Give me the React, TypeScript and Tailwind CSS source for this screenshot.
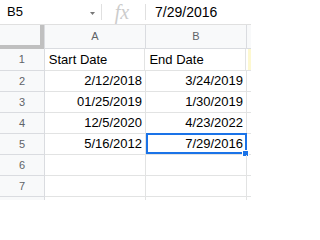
import React from 'react';

const rows: { n: number; a: string; b: string; alignA?: string }[] = [
  { n: 1, a: 'Start Date', b: 'End Date', alignA: 'left' },
  { n: 2, a: '2/12/2018', b: '3/24/2019' },
  { n: 3, a: '01/25/2019', b: '1/30/2019' },
  { n: 4, a: '12/5/2020', b: '4/23/2022' },
  { n: 5, a: '5/16/2012', b: '7/29/2016' },
  { n: 6, a: '', b: '' },
  { n: 7, a: '', b: '' },
];

const App = () => {
  return (
    <div className="w-[251px] h-[200px] overflow-hidden bg-white font-['Liberation_Sans',Arial,sans-serif] text-black">
      {/* formula bar */}
      <div className="flex flex-row items-center h-[25px] border-b border-[#e0e0e0]">
        <div className="w-[101px] h-full flex flex-row items-center justify-between pl-[7px] pr-[6px]">
          <span className="text-[13px]">B5</span>
          <svg width="5" height="3" viewBox="0 0 5 3" className="mt-[2px]">
            <path d="M0 0 L5 0 L2.5 3 Z" fill="#777" />
          </svg>
        </div>
        <div className="w-px h-[16px] bg-[#e0e0e0]" />
        <div className="w-[43px] flex justify-center pr-[3px] font-['Liberation_Serif',serif] italic text-[20px] text-[#cccccc] leading-none">
          fx
        </div>
        <div className="w-px h-[16px] bg-[#e0e0e0]" />
        <div className="pl-[9px] text-[14px]">7/29/2016</div>
      </div>

      {/* column headers */}
      <div className="flex flex-row h-[24px]">
        <div className="w-[45px] h-full bg-[#f8f9fa] border-r border-[#dadce0]">
          <div className="w-[44px] h-full border-r-4 border-b-4 border-[#c0c0c0]" />
        </div>
        <div className="w-[101px] h-full bg-[#f8f9fa] border-r border-b border-[#dadce0] flex items-center justify-center text-[11px] text-[#5f6368]">
          A
        </div>
        <div className="w-[101px] h-full bg-[#f8f9fa] border-r border-b border-[#dadce0] flex items-center justify-center text-[11px] text-[#5f6368]">
          B
        </div>
        <div className="flex-1 h-full bg-[#f8f9fa] border-b border-[#dadce0]" />
      </div>

      {/* data rows */}
      {rows.map((row) => (
        <div key={row.n} className={`flex flex-row ${row.n === 1 ? 'h-[22px]' : 'h-[21px]'}`}>
          <div className="w-[45px] h-full bg-[#f8f9fa] border-r border-b border-[#dadce0] flex items-center justify-center text-[11px] text-[#5f6368]">
            {row.n}
          </div>
          <div
            className={`w-[101px] h-full border-r border-b border-[#e2e3e3] flex items-center px-[3px] text-[13px] ${
              row.alignA === 'left' ? 'justify-start pl-[4px]' : 'justify-end'
            }`}
          >
            {row.a}
          </div>
          <div
            className={`relative w-[101px] h-full border-r border-b border-[#e2e3e3] flex items-center px-[3px] text-[13px] ${
              row.alignA === 'left' ? 'justify-start pl-[4px]' : 'justify-end'
            }`}
          >
            {row.b}
            {row.n === 5 && (
              <>
                <div className="absolute left-0 top-[-1px] w-[101px] h-[21px] border-2 border-[#1a73e8]" />
                <div className="absolute left-[96px] top-[16px] w-[7px] h-[7px] bg-[#1a73e8] border border-white" />
              </>
            )}
          </div>
          <div className="flex-1 h-full border-b border-[#e2e3e3] flex items-stretch">
            {row.n === 1 && <div className="ml-[2px] w-[3px] bg-[#fdf8d0]" />}
          </div>
        </div>
      ))}

      {/* partial row below */}
      <div className="flex flex-row h-[21px]">
        <div className="w-[45px] h-full bg-[#f8f9fa] border-r border-[#dadce0]" />
        <div className="w-[101px] h-full border-r border-[#e2e3e3]" />
        <div className="w-[101px] h-full border-r border-[#e2e3e3]" />
      </div>
    </div>
  );
};

export default App;
